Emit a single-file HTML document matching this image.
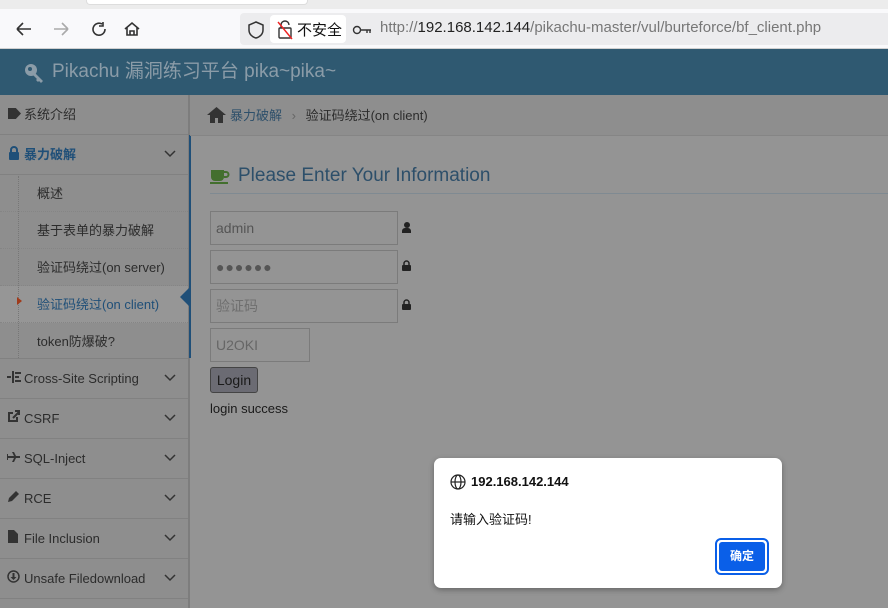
<!DOCTYPE html>
<html><head><meta charset="utf-8"><style>
*{margin:0;padding:0;box-sizing:border-box}
body{width:888px;height:608px;overflow:hidden;position:relative;background:#949494;font-family:"Liberation Sans","Noto Sans CJK SC",sans-serif;font-size:13px;color:#2a2a2a}
.abs{position:absolute}
.top{left:0;top:0;width:888px;height:9px;background:#ececec}
.tab{left:86px;top:0;width:222px;height:5px;background:#fff;border-radius:0 0 4px 4px;border:1px solid #ddd;border-top:none}
.tb{left:0;top:9px;width:888px;height:40px;background:#f9f9fb;border-bottom:1px solid #d0d0d0}
.url{left:240px;top:13px;width:648px;height:32px;background:#ececee;border-radius:4px 0 0 4px}
.ns{left:270px;top:15px;width:76px;height:28px;background:#fff;border-radius:4px}
.hdr{left:0;top:49px;width:888px;height:46px;background:#2f5971;color:#8b9ca8;font-size:19px;line-height:46px;padding-left:52px}
.side{left:0;top:95px;width:190px;height:513px;background:#8e8e8e;border-right:2px solid #7d7d7d}
.item{position:absolute;left:0;width:188px;height:40px;border-bottom:1px solid #818181;line-height:40px;padding-left:24px;color:#2c2c2c}
.sub{position:absolute;left:0;width:188px;height:37px;border-bottom:1px dotted #858585;line-height:37px;padding-left:37px;color:#2c2c2c}
.chev{position:absolute;right:12px;top:15px}
.bc{left:190px;top:95px;width:698px;height:41px;background:#8e8e8e;border-bottom:1px solid #858585;line-height:41px;padding-left:40px;color:#2c2c2c}
.inp{position:absolute;left:210px;width:188px;height:34px;border:1px solid #7b7b7b;background:#949494;padding-left:5px;line-height:32px;font-size:14px;color:#555}
</style></head><body>
<div class="abs top"></div><div class="abs tab"></div>
<div class="abs tb"></div>
<svg class="abs" style="left:14px;top:20px" width="130" height="18" viewBox="0 0 130 18" fill="none" stroke="#333" stroke-width="1.6">
<path d="M3 9h14M3 9l6-6M3 9l6 6"/>
<path d="M40 9h14M54 9l-6-6M54 9l-6 6" stroke="#aaa"/>
<path d="M88 4a6 6 0 1 0 3 5M89 2v4h-4"/>
<path d="M111 9l7-6 7 6M113 7v8h10V7M116 15v-4h4v4"/>
</svg>
<div class="abs url"></div><div class="abs ns"></div>
<svg class="abs" style="left:246px;top:20px" width="20" height="20" viewBox="0 0 20 20" fill="none" stroke="#333" stroke-width="1.5"><path d="M10 2l7 3v5c0 4-3 7-7 8-4-1-7-4-7-8V5z"/></svg>
<svg class="abs" style="left:276px;top:20px" width="18" height="20" viewBox="0 0 18 20" fill="none" stroke="#333" stroke-width="1.4"><rect x="3" y="8" width="12" height="10" rx="1"/><path d="M5 8V5a4 4 0 0 1 8 0"/><path d="M2 2l14 17" stroke="#e22"/></svg>
<div class="abs" style="left:297px;top:19px;font-size:15px;color:#111">不安全</div>
<svg class="abs" style="left:352px;top:24px" width="20" height="12" viewBox="0 0 20 12" fill="none" stroke="#333" stroke-width="1.4"><circle cx="5" cy="6" r="3.5"/><path d="M9 6h10M15 6v3M18 6v3"/></svg>
<div class="abs" style="left:380px;top:19px;font-size:15px;color:#777">http://<span style="color:#222">192.168.142.144</span>/pikachu-master/vul/burteforce/bf_client.php</div>
<div class="abs hdr">Pikachu 漏洞练习平台 pika~pika~</div>
<svg class="abs" style="left:24px;top:63px" width="22" height="20" viewBox="0 0 22 20" fill="#8b9ca8"><circle cx="7" cy="7" r="6"/><circle cx="6" cy="6" r="2" fill="#2f5971"/><path d="M10 9l9 9-2 2-2-2-1 1-2-2 1-1-5-5z"/></svg>
<div class="abs side">
<div class="item" style="top:0">系统介绍</div>
<div class="item" style="top:40px;color:#1f4f78;font-weight:bold">暴力破解<svg class="chev" width="12" height="8" viewBox="0 0 12 8"><path d="M1 1l5 5 5-5" fill="none" stroke="#333" stroke-width="1.5"/></svg></div>
<div class="sub" style="top:80px">概述</div>
<div class="sub" style="top:117px">基于表单的暴力破解</div>
<div class="sub" style="top:154px">验证码绕过(on server)</div>
<div class="sub" style="top:191px;background:#969696;color:#1f4f78">验证码绕过(on client)</div>
<div class="sub" style="top:228px;border-bottom:1px solid #818181;height:36px">token防爆破?</div>
<div class="item" style="top:264px">Cross-Site Scripting<svg class="chev" width="12" height="8" viewBox="0 0 12 8"><path d="M1 1l5 5 5-5" fill="none" stroke="#333" stroke-width="1.5"/></svg></div>
<div class="item" style="top:304px">CSRF<svg class="chev" width="12" height="8" viewBox="0 0 12 8"><path d="M1 1l5 5 5-5" fill="none" stroke="#333" stroke-width="1.5"/></svg></div>
<div class="item" style="top:344px">SQL-Inject<svg class="chev" width="12" height="8" viewBox="0 0 12 8"><path d="M1 1l5 5 5-5" fill="none" stroke="#333" stroke-width="1.5"/></svg></div>
<div class="item" style="top:384px">RCE<svg class="chev" width="12" height="8" viewBox="0 0 12 8"><path d="M1 1l5 5 5-5" fill="none" stroke="#333" stroke-width="1.5"/></svg></div>
<div class="item" style="top:424px">File Inclusion<svg class="chev" width="12" height="8" viewBox="0 0 12 8"><path d="M1 1l5 5 5-5" fill="none" stroke="#333" stroke-width="1.5"/></svg></div>
<div class="item" style="top:464px">Unsafe Filedownload<svg class="chev" width="12" height="8" viewBox="0 0 12 8"><path d="M1 1l5 5 5-5" fill="none" stroke="#333" stroke-width="1.5"/></svg></div>
</div>
<div class="abs" style="left:18px;top:176px;width:0;height:182px;border-left:1px dotted #777"></div>
<div class="abs" style="left:8px;top:108px;width:13px;height:11px;background:#333;clip-path:polygon(0 0,60% 0,100% 50%,60% 100%,0 100%)"></div>
<svg class="abs" style="left:8px;top:146px" width="12" height="14" viewBox="0 0 12 14"><path d="M3 6V4a3 3 0 0 1 6 0v2" fill="none" stroke="#1f4f78" stroke-width="2"/><rect x="1" y="6" width="10" height="8" rx="1" fill="#1f4f78"/></svg>
<svg class="abs" style="left:7px;top:370px" width="14" height="14" viewBox="0 0 14 14" fill="#333"><rect x="0" y="6" width="4" height="2"/><rect x="5" y="1" width="2" height="12"/><rect x="8" y="2" width="6" height="2"/><rect x="8" y="6" width="4" height="2"/><rect x="8" y="10" width="6" height="2"/></svg>
<svg class="abs" style="left:7px;top:410px" width="13" height="13" viewBox="0 0 13 13"><path d="M10 7v4H2V3h4" fill="none" stroke="#333" stroke-width="2"/><path d="M6 8l6-6M8 1h4v4" fill="none" stroke="#333" stroke-width="2"/></svg>
<svg class="abs" style="left:7px;top:452px" width="13" height="10" viewBox="0 0 13 10" fill="#333"><path d="M0 4h13v2H0zM5 0h2l2 4H7zM5 10h2l2-4H7zM0 2h1v6H0z"/></svg>
<svg class="abs" style="left:7px;top:490px" width="13" height="13" viewBox="0 0 13 13" fill="#333"><path d="M1 12l1-4 7-7 3 3-7 7z"/></svg>
<svg class="abs" style="left:8px;top:530px" width="10" height="13" viewBox="0 0 10 13" fill="#333"><path d="M0 0h6l4 4v9H0z"/></svg>
<svg class="abs" style="left:7px;top:570px" width="13" height="13" viewBox="0 0 13 13"><circle cx="6.5" cy="6.5" r="5.5" fill="none" stroke="#333" stroke-width="1.5"/><path d="M5.5 3h2v4h2l-3 3-3-3h2z" fill="#333"/></svg>
<div class="abs" style="left:17px;top:297px;border:4px solid transparent;border-left:5px solid #a03a1a"></div>
<div class="abs" style="left:180px;top:288px;border:9px solid transparent;border-right:9px solid #1f4f78;border-left:0"></div>
<div class="abs" style="left:189px;top:135px;width:2px;height:223px;background:#1f4f78"></div>
<div class="abs bc"><span style="color:#2d4f6a">暴力破解</span> <span style="color:#666;margin:0 6px">›</span> 验证码绕过(on client)</div>
<svg class="abs" style="left:207px;top:107px" width="19" height="16" viewBox="0 0 19 16" fill="#333"><path d="M9.5 0L0 8h3v8h5v-5h3v5h5V8h3z"/></svg>
<svg class="abs" style="left:210px;top:167px" width="20" height="18" viewBox="0 0 20 18" fill="#436f2e"><path d="M1 3h13v7a4 4 0 0 1-4 4H5a4 4 0 0 1-4-4z"/><path d="M14 5h2a2 2 0 0 1 0 5h-2" fill="none" stroke="#436f2e" stroke-width="2"/><rect x="0" y="15" width="18" height="2"/></svg>
<div class="abs" style="left:238px;top:165px;font-size:19px;color:#2d4f6a">Please Enter Your Information</div>
<div class="abs" style="left:210px;top:193px;width:678px;height:1px;background:#7f8a92"></div>
<div class="inp" style="top:211px">admin</div>
<div class="inp" style="top:250px;letter-spacing:1px">●●●●●●</div>
<div class="inp" style="top:289px;color:#6f6f6f">验证码</div>
<div class="inp" style="top:328px;width:100px;color:#666">U2OKI</div>
<div class="abs" style="left:402px;top:222px;width:9px;height:11px"><div style="width:6px;height:6px;border-radius:50%;background:#222;margin-left:1.5px"></div><div style="width:9px;height:5px;background:#222;border-radius:3px 3px 0 0"></div></div>
<svg class="abs" style="left:402px;top:260px" width="9" height="11" viewBox="0 0 9 11"><path d="M2 5V3.5a2.5 2.5 0 0 1 5 0V5" fill="none" stroke="#222" stroke-width="1.5"/><rect x="0" y="5" width="9" height="6" rx="1" fill="#222"/></svg>
<svg class="abs" style="left:402px;top:299px" width="9" height="11" viewBox="0 0 9 11"><path d="M2 5V3.5a2.5 2.5 0 0 1 5 0V5" fill="none" stroke="#222" stroke-width="1.5"/><rect x="0" y="5" width="9" height="6" rx="1" fill="#222"/></svg>
<div class="abs" style="left:210px;top:367px;width:48px;height:26px;background:#6b6b73;border:1px solid #444;border-radius:3px;font-size:14px;line-height:24px;text-align:center;color:#1a1a1a">Login</div>
<div class="abs" style="left:210px;top:401px;font-size:13px;color:#1a1a1a">login success</div>
<div class="abs" style="left:434px;top:458px;width:348px;height:130px;background:#fff;border-radius:7px;box-shadow:0 2px 6px rgba(0,0,0,.3)">
<svg class="abs" style="left:16px;top:16px" width="16" height="16" viewBox="0 0 16 16" fill="none" stroke="#222" stroke-width="1.2"><circle cx="8" cy="8" r="7"/><ellipse cx="8" cy="8" rx="3" ry="7"/><path d="M1 8h14"/></svg>
<div class="abs" style="left:37px;top:16px;font-weight:bold;font-size:13px;color:#111">192.168.142.144</div>
<div class="abs" style="left:16px;top:51px;font-size:13px;color:#111">请输入验证码!</div>
<div class="abs" style="left:281px;top:80px;width:54px;height:37px;border:2px solid #0a5fe8;border-radius:6px;padding:2px"><div style="background:#0a5fe8;width:100%;height:100%;border-radius:3px;color:#fff;font-size:12px;font-weight:bold;text-align:center;line-height:29px">确定</div></div>
</div>
</body></html>
